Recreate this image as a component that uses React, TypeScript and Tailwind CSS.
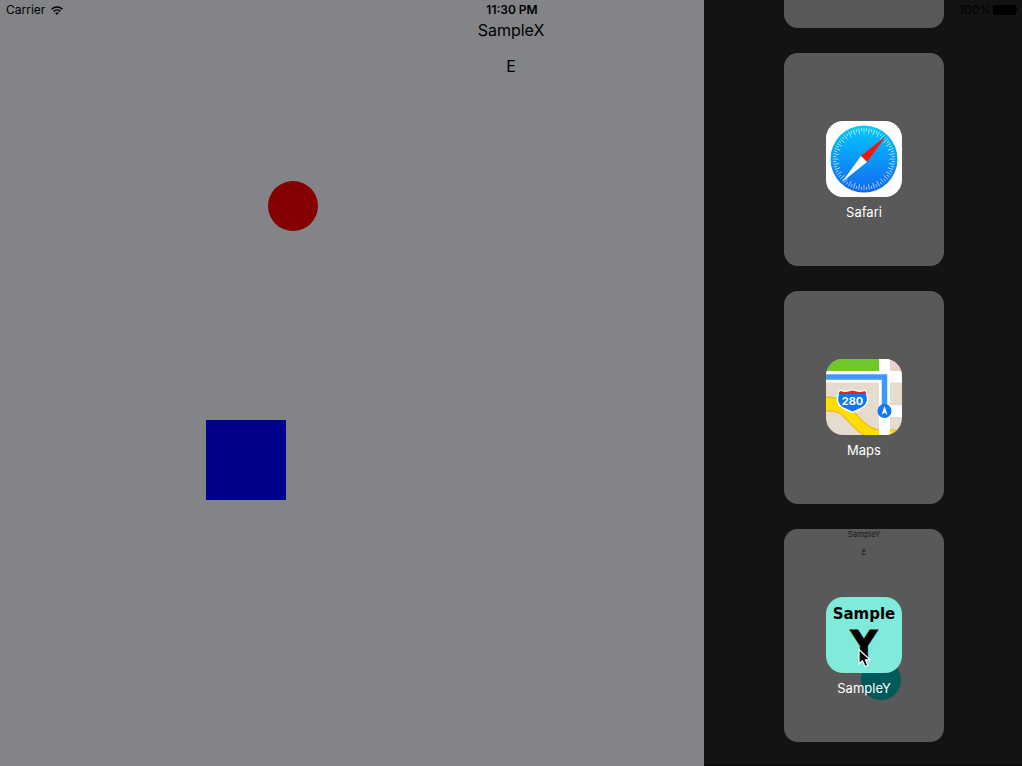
import type { ReactNode } from 'react';

const ticks = Array.from({ length: 72 }, (_, i) => i * 5);

function SafariIcon() {
  return (
    <svg viewBox="0 0 76 76" className="size-full" aria-hidden="true">
      <defs>
        <linearGradient id="dial" x1="0" y1="0" x2="0" y2="1">
          <stop offset="0" stopColor="#06c8fb" />
          <stop offset="0.45" stopColor="#0a9df8" />
          <stop offset="1" stopColor="#1368f0" />
        </linearGradient>
      </defs>
      <rect width="76" height="76" fill="#fff" />
      <circle cx="38" cy="38" r="33.5" fill="url(#dial)" />
      {ticks.map((angle, i) => (
        <line
          key={angle}
          x1="38"
          x2="38"
          y1="7"
          y2={i % 2 ? 10 : 12.5}
          stroke="#fff"
          strokeWidth="0.7"
          strokeOpacity="0.85"
          transform={`rotate(${angle} 38 38)`}
        />
      ))}
      <path d="M60 15 35 35 41 41Z" fill="#ff1005" />
      <path d="M16 61 35 35 41 41Z" fill="#fff" />
    </svg>
  );
}

function MapsIcon() {
  return (
    <svg viewBox="0 0 76 76" className="size-full" aria-hidden="true">
      <rect width="76" height="76" fill="#e6dccd" />
      <rect x="64" width="12" height="12" fill="#eccfc7" />
      <rect width="53" height="12" fill="#70c82b" />
      <path d="M-2 38.5C10 37 18 41 25 49C34 60 42 70 54 71H78V78H44C34 76 27 67 20 60C14 53 9 51-2 52Z" fill="#ffdf00" stroke="#f4b31c" strokeWidth="1.2" />
      <path d="M0 12H76V23.5H0Z" fill="#fff" />
      <path d="M53 0H64V76H53Z" fill="#fff" />
      <path d="M64 46.5H76V58H64Z" fill="#fff" />
      <path d="M0 18H58.5V50" fill="none" stroke="#3f98fb" strokeWidth="5.5" />
      <path d="M14 31.500Q20 33.500 26.500 31Q33 33.500 39 31.500Q42 36 41.500 42C40 49 33 50 26.500 53.500C20 50 13 49 11.500 42Q11 36 14 31.500Z" fill="#1277f3" stroke="#fff" strokeWidth="1.5" />
      <path d="M14 32Q20 34 26.500 31.500Q33 34 39 32L40.500 35H12.500Z" fill="#e0252a" />
      <text x="26.5" y="46" textAnchor="middle" fill="#fff" className="font-['Inter',sans-serif] text-[11px] font-bold">280</text>
      <circle cx="58.5" cy="52" r="7" fill="#1277f3" />
      <path d="M58.5 47 61.5 56 58.5 53.5 55.5 56Z" fill="#fff" />
    </svg>
  );
}

function SampleIcon() {
  return (
    <span className="flex size-full flex-col items-center bg-[#80eadb] pt-[9px] font-['DejaVu_Sans',sans-serif] font-bold text-black">
      <span className="text-[15px] leading-4">Sample</span>
      <span className="text-[37px] leading-[46px] [-webkit-text-stroke:1px_black]">Y</span>
    </span>
  );
}

function AppCard({ label, icon, children }: { label: string; icon: ReactNode; children?: ReactNode }) {
  return (
    <button
      type="button"
      className="relative flex h-[213px] w-40 shrink-0 flex-col items-center rounded-[14px] bg-[#595959] pt-[68px]"
    >
      {children}
      <span className="relative size-[76px] overflow-hidden rounded-[17px]">{icon}</span>
      <span className="relative mt-[5px] text-[13px] leading-5 text-white">{label}</span>
    </button>
  );
}

function Cursor() {
  return (
    <svg viewBox="0 0 14 20" className="absolute top-[119px] left-[74px] z-10 h-5 w-3.5" aria-hidden="true">
      <path d="M1 1.5V16L4.500 12.800 7 18.500 9.800 17.300 7.400 11.800H12Z" fill="#000" stroke="#fff" strokeWidth="1.2" />
    </svg>
  );
}

export default function App() {
  return (
    <div className="relative flex h-screen min-h-[560px] overflow-hidden bg-[#838487] font-['Inter',sans-serif] text-black">
      <main className="relative min-w-0 flex-1">
        <div className="absolute top-[181px] left-[268px] size-[50px] rounded-full bg-[#850000]" />
        <div className="absolute top-[420px] left-[206px] size-20 bg-[#00008a]" />
      </main>

      <aside
        aria-label="App list"
        className="flex w-[318px] shrink-0 flex-col items-center justify-end gap-[25px] border-b-2 border-[#100c0c] bg-[#131313] pb-[22px] pl-0.5"
      >
        <div className="h-[213px] w-40 shrink-0 rounded-[14px] bg-[#595959]" />
        <AppCard label="Safari" icon={<SafariIcon />} />
        <AppCard label="Maps" icon={<MapsIcon />} />
        <AppCard label="SampleY" icon={<SampleIcon />}>
          <span className="absolute inset-x-0 top-0 flex flex-col gap-2 text-[8px] leading-[10px] text-[#1c1c1c]">
            <span>SampleY</span>
            <span>E</span>
          </span>
          <span className="absolute top-[131px] left-[77px] size-10 rounded-full bg-[#005a5a]" />
          <Cursor />
        </AppCard>
      </aside>

      <header className="pointer-events-none absolute inset-x-0 top-0 pt-px">
        <div className="grid grid-cols-3 items-center pr-1 pl-1.5 text-[12px] leading-[18px]">
          <span className="flex items-center gap-1.5">
            Carrier
            <svg viewBox="0 0 12 9" className="h-[9px] w-3" fill="none" stroke="#000" strokeWidth="1.6" aria-label="Wi-Fi">
              <path d="M.6 3.300A7.600 7.600 0 0 1 11.400 3.300" />
              <path d="M2.700 5.400A4.700 4.700 0 0 1 9.300 5.400" />
              <path d="M6 9 4.200 7.100A2.600 2.600 0 0 1 7.800 7.100Z" fill="#000" stroke="none" />
            </svg>
          </span>
          <time className="text-center font-semibold">11:30 PM</time>
          <span className="flex items-center justify-end gap-0.5">
            100%
            <svg viewBox="0 0 25 10" className="h-2.5 w-[25px]" aria-label="Battery full">
              <rect width="23" height="10" rx="1.5" />
              <path d="M23.500 3Q25 3.500 25 5T23.500 7Z" />
            </svg>
          </span>
        </div>
        <h1 className="text-center text-[16px] leading-[22px]">SampleX</h1>
        <p className="mt-3.5 text-center text-[16px] leading-[22px]">E</p>
      </header>
    </div>
  );
}
